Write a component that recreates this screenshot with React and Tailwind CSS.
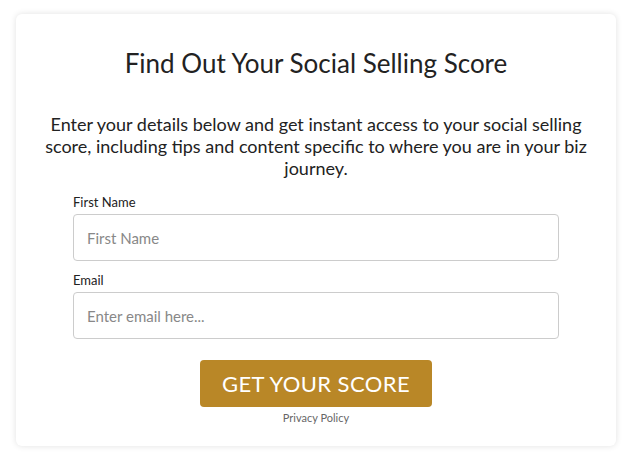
export default function App() {
    return (
        <div className="min-h-screen bg-white pt-[14px] px-[16px] font-['Lato',sans-serif]">
            <div className="w-[600px] h-[432px] bg-white rounded-[6px] shadow-[0_0_6px_rgba(0,0,0,0.12)] flex flex-col items-center">
                <h1 className="mt-[34px] text-[26px] leading-[30px] text-[#222]">
                    Find Out Your Social Selling Score
                </h1>
                <p className="mt-[35px] w-[560px] text-center text-[18px] leading-[22px] text-[#222]">
                    Enter your details below and get instant access to your social selling score, including tips and content specific to where you are in your biz journey.
                </p>
                <form className="mt-[14px] w-[486px] flex flex-col" onSubmit={(e) => e.preventDefault()}>
                    <label className="text-[13px] leading-[18px] text-[#222]">First Name</label>
                    <input
                        type="text"
                        placeholder="First Name"
                        className="mt-[3px] h-[47px] rounded-[4px] border border-[#ccc] px-[13px] text-[15px] placeholder:text-[#888] outline-none"
                    />
                    <label className="mt-[10px] text-[13px] leading-[18px] text-[#222]">Email</label>
                    <input
                        type="email"
                        placeholder="Enter email here..."
                        className="mt-[3px] h-[47px] rounded-[4px] border border-[#ccc] px-[13px] text-[15px] placeholder:text-[#888] outline-none"
                    />
                    <button className="mt-[21px] self-center w-[232px] h-[47px] rounded-[4px] bg-[#b98727] text-white text-[22px] tracking-[0.4px]">
                        GET YOUR SCORE
                    </button>
                    <a href="#" className="mt-[3px] self-center text-[11px] text-[#666]">Privacy Policy</a>
                </form>
            </div>
        </div>
    );
}
